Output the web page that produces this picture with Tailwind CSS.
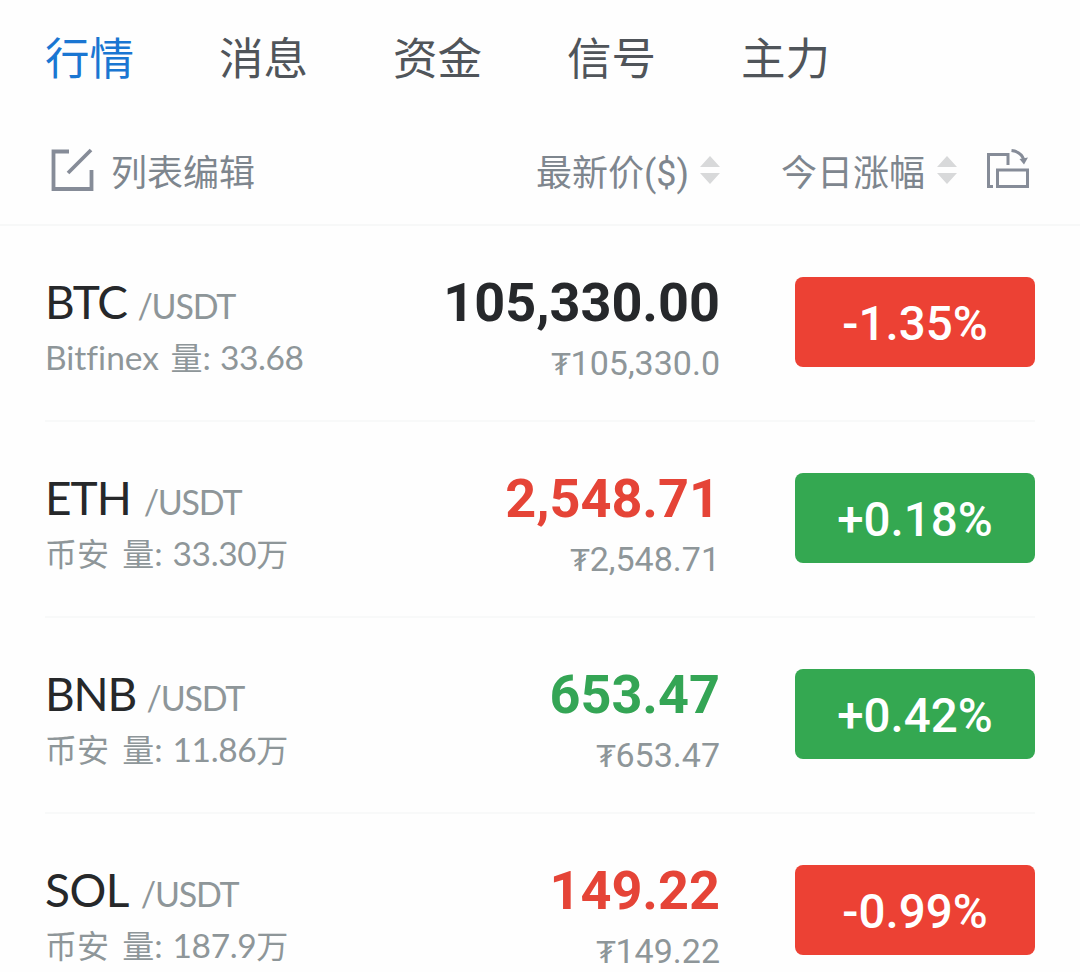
<!DOCTYPE html>
<html lang="zh-CN">
<head>
  <meta charset="UTF-8" />
  <title>行情</title>
  <script src="https://cdn.jsdelivr.net/npm/@tailwindcss/browser@4"></script>
</head>
<body class="bg-[#fefefe] h-[972px] overflow-hidden whitespace-nowrap font-['Lato','Noto_Sans_CJK_SC',sans-serif]">
  <nav class="flex h-[116px] pl-[45px] gap-[85px] pt-[25px] text-[44.5px] leading-[66px] text-[#50555a]">
    <a class="text-[#1a76d2]">行情</a>
    <a>消息</a>
    <a>资金</a>
    <a>信号</a>
    <a>主力</a>
  </nav>

  <header class="flex items-center h-[110px] pl-[50px] pr-[50px] border-b-2 border-[#f7f8f8] text-[36px] text-[#7e868e]">
    <svg class="w-11 h-11" viewBox="0 0 44 44" fill="none" stroke="#868c98" stroke-width="3.8">
      <path d="M19 3.500H3.500V41H41.500V22" />
      <path d="M18 25L41 2" />
    </svg>
    <span class="ml-[17px] w-[425px] pt-[4px]">列表编辑</span>
    <span class="w-[153px] pt-[8px] font-['Roboto','Noto_Sans_CJK_SC',sans-serif]">最新价($)</span>
    <svg class="ml-[11px] w-5 h-7" viewBox="0 0 20 28" fill="#d8d9da">
      <path d="M10 0L20 11H0ZM0 17H20L10 28Z" />
    </svg>
    <span class="ml-[61px] w-[144px] pt-[4px]">今日涨幅</span>
    <svg class="ml-3 w-5 h-7" viewBox="0 0 20 28" fill="#d8d9da">
      <path d="M10 0L20 11H0ZM0 17H20L10 28Z" />
    </svg>
    <svg class="ml-[29px] w-11 h-11" viewBox="0 0 44 44" fill="none" stroke="#868c98" stroke-width="3">
      <path d="M7 38.500H2.500V6.500H22V17" />
      <path d="M11.500 22H41.500V38.500H11.500Z" />
      <path d="M25.500 2.500Q35 3.500 38 12" />
      <path d="M33.500 11L42 9.500L38 16.500Z" fill="#868c98" stroke="none" />
    </svg>
  </header>

  <main class="px-[45px]">
    <section class="flex h-[196px] pt-[51px] border-b-2 border-[#f8f9f9]">
      <div class="flex-1">
        <div class="h-[54px] leading-[50px] text-[46px] tracking-[-1.2px] text-[#26282a]">BTC <span class="text-[34px] tracking-[-1.2px] text-[#8e9699]">/USDT</span></div>
        <div class="h-[54px] leading-[52px] text-[33.500px] [word-spacing:3px] [font-variant-ligatures:none] text-[#8e9699]">Bitfinex <span class="text-[32px]">量</span>:<span class="ml-[9px] tracking-[-0.4px]">33.68</span></div>
      </div>
      <div class="w-[300px] mr-[75px] text-right font-['Roboto','DejaVu_Sans',sans-serif]">
        <div class="h-[56px] leading-[52px] text-[54px] font-bold text-[#26282b]">105,330.00</div>
        <div class="h-[54px] leading-[60px] text-[34px] text-[#8e9699]"><span class="text-[30px]">₮</span>105,330.0</div>
      </div>
      <div class="w-60 h-[90px] rounded-lg bg-[#ec4134] text-white text-center text-[47.500px] leading-[94px] font-medium font-['Roboto']">-1.35%</div>
    </section>

    <section class="flex h-[196px] pt-[51px] border-b-2 border-[#f8f9f9]">
      <div class="flex-1">
        <div class="h-[54px] leading-[50px] text-[46px] tracking-[-1px] text-[#26282a]">ETH <span class="ml-[2px] text-[34px] tracking-[-1.2px] text-[#8e9699]">/USDT</span></div>
        <div class="h-[54px] leading-[52px] text-[33.500px] [word-spacing:5px] text-[#8e9699]"><span class="text-[32px]">币安 量</span>:<span class="ml-[10px] tracking-[-0.4px]">33.30</span><span class="text-[32px]">万</span></div>
      </div>
      <div class="w-[300px] mr-[75px] text-right font-['Roboto','DejaVu_Sans',sans-serif]">
        <div class="h-[56px] leading-[52px] text-[54px] font-bold text-[#e54437]">2,548.71</div>
        <div class="h-[54px] leading-[60px] text-[34px] text-[#8e9699]"><span class="text-[30px]">₮</span>2,548.71</div>
      </div>
      <div class="w-60 h-[90px] rounded-lg bg-[#34a851] text-white text-center text-[47.500px] leading-[94px] font-medium font-['Roboto']">+0.18%</div>
    </section>

    <section class="flex h-[196px] pt-[51px] border-b-2 border-[#f8f9f9]">
      <div class="flex-1">
        <div class="h-[54px] leading-[50px] text-[46px] tracking-[-1.2px] text-[#26282a]">BNB <span class="text-[34px] tracking-[-1.2px] text-[#8e9699]">/USDT</span></div>
        <div class="h-[54px] leading-[52px] text-[33.500px] [word-spacing:5px] text-[#8e9699]"><span class="text-[32px]">币安 量</span>:<span class="ml-[10px] tracking-[-0.4px]">11.86</span><span class="text-[32px]">万</span></div>
      </div>
      <div class="w-[300px] mr-[75px] text-right font-['Roboto','DejaVu_Sans',sans-serif]">
        <div class="h-[56px] leading-[52px] text-[54px] font-bold text-[#34a555]">653.47</div>
        <div class="h-[54px] leading-[60px] text-[34px] text-[#8e9699]"><span class="text-[30px]">₮</span>653.47</div>
      </div>
      <div class="w-60 h-[90px] rounded-lg bg-[#34a851] text-white text-center text-[47.500px] leading-[94px] font-medium font-['Roboto']">+0.42%</div>
    </section>

    <section class="flex h-[196px] pt-[51px]">
      <div class="flex-1">
        <div class="h-[54px] leading-[50px] text-[46px] tracking-[-0.5px] text-[#26282a]">SOL <span class="ml-[2px] text-[34px] tracking-[-1.2px] text-[#8e9699]">/USDT</span></div>
        <div class="h-[54px] leading-[52px] text-[33.500px] [word-spacing:5px] text-[#8e9699]"><span class="text-[32px]">币安 量</span>:<span class="ml-[10px] tracking-[-0.4px]">187.9</span><span class="text-[32px]">万</span></div>
      </div>
      <div class="w-[300px] mr-[75px] text-right font-['Roboto','DejaVu_Sans',sans-serif]">
        <div class="h-[56px] leading-[52px] text-[54px] font-bold text-[#e54437]">149.22</div>
        <div class="h-[54px] leading-[60px] text-[34px] text-[#8e9699]"><span class="text-[30px]">₮</span>149.22</div>
      </div>
      <div class="w-60 h-[90px] rounded-lg bg-[#ec4134] text-white text-center text-[47.500px] leading-[94px] font-medium font-['Roboto']">-0.99%</div>
    </section>
  </main>
</body>
</html>
